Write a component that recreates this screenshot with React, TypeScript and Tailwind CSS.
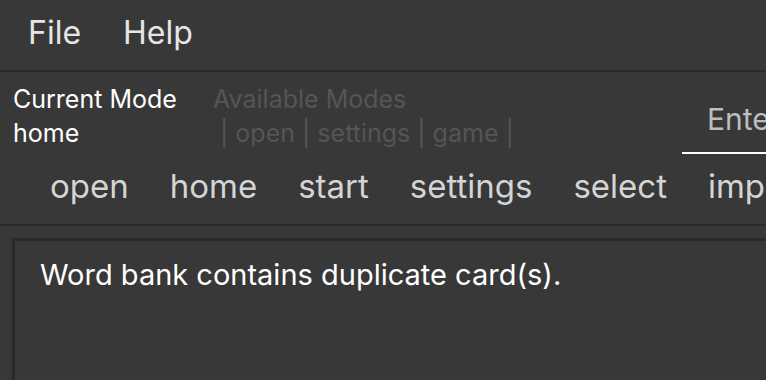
// Word bank app main window

const menus = ['File', 'Help'];
const commands = ['open', 'home', 'start', 'settings', 'select', 'import'];

export default function App() {
    return (
        <div
            className="w-[766px] h-[380px] overflow-hidden bg-[#383838] flex flex-col"
            style={{ fontFamily: 'Inter, "Noto Sans", sans-serif' }}
        >
            {/* 메뉴 바 */}
            <div className="h-[70px] shrink-0 flex items-start pt-[13px] pl-[7px]">
                {menus.map((m) => (
                    <span key={m} className="px-[21px] text-[32px] leading-[40px] text-[#e6e6e6]">
                        {m}
                    </span>
                ))}
            </div>
            <div className="h-[2px] shrink-0 bg-[#2a2a2a]" />

            {/* 모드 + 명령 입력 */}
            <div className="shrink-0 flex">
                <div className="w-[213px] shrink-0 pl-[13px] pt-[10px] text-[25px] leading-[34px] text-white">
                    <p>Current Mode</p>
                    <p>home</p>
                </div>
                <div className="w-[469px] shrink-0 pt-[10px] text-[25px] leading-[34px] text-[#555555]">
                    <p>Available Modes</p>
                    <p className="pl-[7px]">| open | settings | game |</p>
                </div>
                <input
                    type="text"
                    placeholder="Enter command here..."
                    className="w-[320px] shrink-0 mt-[20px] h-[62px] pb-[6px] pl-[25px] bg-transparent outline-none border-b-2 border-white text-[30px] text-[#bdbdbd] placeholder:text-[#bdbdbd]"
                />
            </div>
            <div className="shrink-0 flex gap-[41px] pl-[50px] pt-[12px] pb-[18px] whitespace-nowrap overflow-hidden">
                {commands.map((c) => (
                    <span key={c} className="text-[33px] leading-[40px] text-[#d4d4d4]">
                        {c}
                    </span>
                ))}
            </div>
            <div className="h-[2px] shrink-0 bg-[#2a2a2a]" />

            {/* 결과 표시 */}
            <div className="flex-1 mt-[12px] ml-[12px] border-t-[3px] border-l-[3px] border-[#2a2a2a] pt-[16px] pl-[25px]">
                <p className="text-[29px] leading-[36px] text-white">
                    Word bank contains duplicate card(s).
                </p>
            </div>
        </div>
    )
}
